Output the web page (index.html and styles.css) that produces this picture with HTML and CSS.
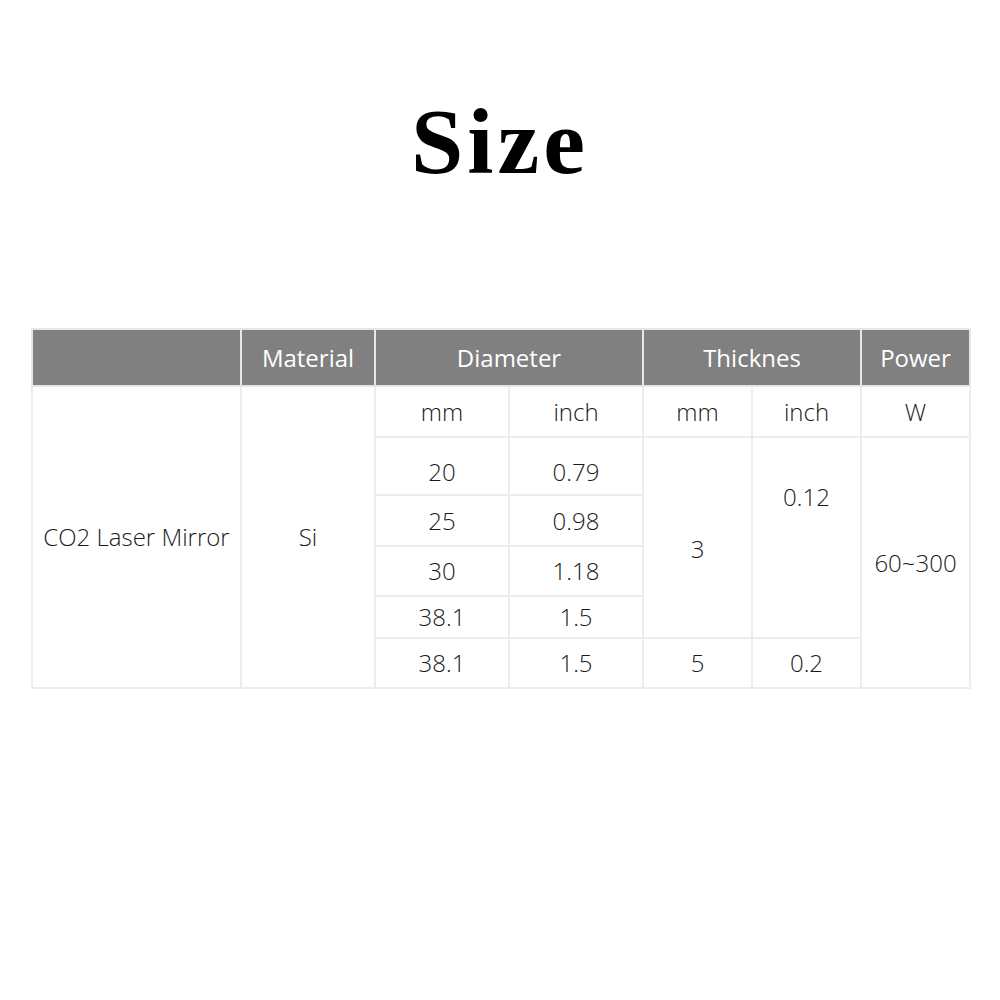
FILE: index.html
```html
<!DOCTYPE html>
<html>
<head>
<meta charset="utf-8">
<link rel="stylesheet" href="styles.css">
</head>
<body>
<h1 class="title">Size</h1>
<table class="spec">
  <colgroup>
    <col class="c-name"><col class="c-mat"><col class="c-d"><col class="c-d"><col class="c-t"><col class="c-t"><col class="c-t">
  </colgroup>
  <tr class="head">
    <th></th><th>Material</th><th colspan="2">Diameter</th><th colspan="2">Thicknes</th><th>Power</th>
  </tr>
  <tr class="r-unit">
    <td rowspan="6">CO2 Laser Mirror</td><td rowspan="6">Si</td>
    <td>mm</td><td>inch</td><td>mm</td><td>inch</td><td>W</td>
  </tr>
  <tr class="r1">
    <td class="low">20</td><td class="low">0.79</td><td rowspan="4" class="three">3</td><td rowspan="4" class="t012">0.12</td><td rowspan="5">60~300</td>
  </tr>
  <tr class="r2"><td>25</td><td>0.98</td></tr>
  <tr class="r3"><td>30</td><td>1.18</td></tr>
  <tr class="r4"><td>38.1</td><td>1.5</td></tr>
  <tr class="r5"><td>38.1</td><td>1.5</td><td>5</td><td>0.2</td></tr>
</table>
</body>
</html>
```
FILE: styles.css
```css
html, body { margin: 0; padding: 0; background: #fff; }
.title {
  margin: 0;
  padding-top: 94px;
  font-family: "Liberation Serif", serif;
  font-weight: bold;
  font-size: 94px;
  line-height: 1;
  letter-spacing: 4px;
  text-align: center;
  color: #000;
}
.spec {
  margin: 140px 0 0 31px;
  width: 938px;
  border-collapse: collapse;
  table-layout: fixed;
  font-family: "Open Sans", sans-serif;
  font-weight: 300;
  font-size: 24px;
  line-height: 30px;
  color: #1a1a1a;
}
.c-name { width: 209px; }
.c-mat { width: 134px; }
.c-d { width: 134px; }
.c-t { width: 109px; }
.spec th, .spec td {
  border: 2px solid #ededed;
  padding: 0;
  text-align: center;
  vertical-align: middle;
}
.spec th {
  background: #808080;
  color: #fff;
  font-weight: 400;
  border-color: #e6e6e6;
}
.head { height: 57px; }
.r-unit { height: 51px; }
.r1 { height: 58px; }
.r2 { height: 51px; }
.r3 { height: 50px; }
.r4 { height: 42px; }
.r5 { height: 50px; }
.spec td.low { vertical-align: top; padding-top: 19px; }
.spec td.three { vertical-align: top; padding-top: 96px; }
.spec td.t012 { vertical-align: top; padding-top: 44px; }
```
